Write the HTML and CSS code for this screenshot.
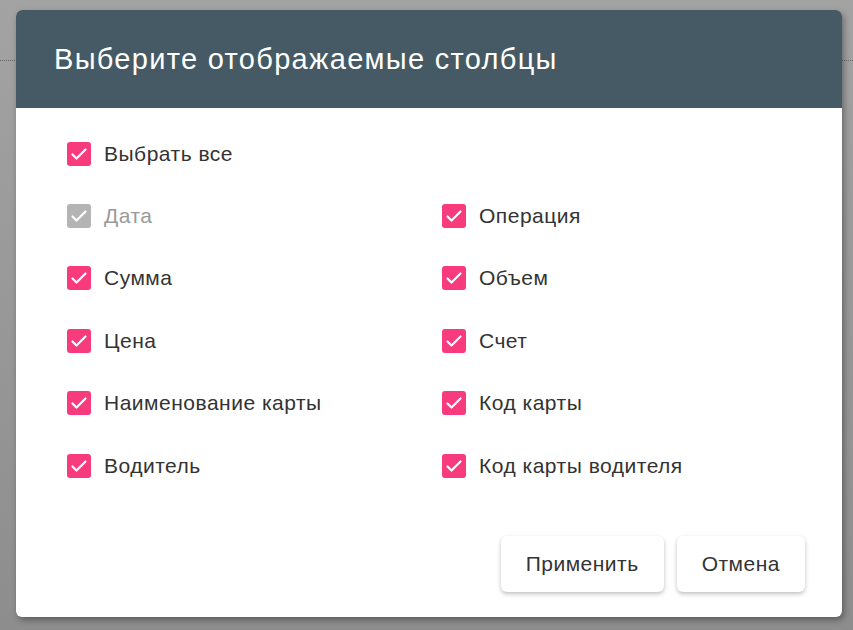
FILE: index.html
```html
<!DOCTYPE html>
<html lang="ru">

<head>
    <meta charset="UTF-8">
    <meta name="viewport" content="width=device-width, initial-scale=1.0">
    <title>Столбцы</title>
    <link rel="stylesheet" href="styles.css">
</head>

<body>
    <div class="backdrop">
        <div class="rule"></div>
        <div class="dialog">
            <div class="dialog-header">
                <h1>Выберите отображаемые столбцы</h1>
            </div>
            <div class="dialog-body">
                <label class="check">
                    <span class="box"><svg viewBox="0 0 24 24"><path d="M5.5 12.5l4 4 9-9"/></svg></span>
                    Выбрать все
                </label>
                <div class="columns">
                    <label class="check disabled">
                        <span class="box"><svg viewBox="0 0 24 24"><path d="M5.5 12.5l4 4 9-9"/></svg></span>
                        Дата
                    </label>
                    <label class="check">
                        <span class="box"><svg viewBox="0 0 24 24"><path d="M5.5 12.5l4 4 9-9"/></svg></span>
                        Операция
                    </label>
                    <label class="check">
                        <span class="box"><svg viewBox="0 0 24 24"><path d="M5.5 12.5l4 4 9-9"/></svg></span>
                        Сумма
                    </label>
                    <label class="check">
                        <span class="box"><svg viewBox="0 0 24 24"><path d="M5.5 12.5l4 4 9-9"/></svg></span>
                        Объем
                    </label>
                    <label class="check">
                        <span class="box"><svg viewBox="0 0 24 24"><path d="M5.5 12.5l4 4 9-9"/></svg></span>
                        Цена
                    </label>
                    <label class="check">
                        <span class="box"><svg viewBox="0 0 24 24"><path d="M5.5 12.5l4 4 9-9"/></svg></span>
                        Счет
                    </label>
                    <label class="check">
                        <span class="box"><svg viewBox="0 0 24 24"><path d="M5.5 12.5l4 4 9-9"/></svg></span>
                        Наименование карты
                    </label>
                    <label class="check">
                        <span class="box"><svg viewBox="0 0 24 24"><path d="M5.5 12.5l4 4 9-9"/></svg></span>
                        Код карты
                    </label>
                    <label class="check">
                        <span class="box"><svg viewBox="0 0 24 24"><path d="M5.5 12.5l4 4 9-9"/></svg></span>
                        Водитель
                    </label>
                    <label class="check">
                        <span class="box"><svg viewBox="0 0 24 24"><path d="M5.5 12.5l4 4 9-9"/></svg></span>
                        Код карты водителя
                    </label>
                </div>
            </div>
            <div class="dialog-actions">
                <button class="btn">Применить</button>
                <button class="btn">Отмена</button>
            </div>
        </div>
    </div>
</body>

</html>
```

FILE: styles.css
```css
* {
    font-family: "Liberation Sans", Arial, sans-serif;
    box-sizing: border-box;
}

body {
    margin: 0;
    background-color: #9a9a9a;
}

.backdrop {
    position: relative;
    width: 853px;
    height: 630px;
    padding: 10px 0 0 16px;
    background: linear-gradient(#a3a3a3, #8d8d8d);
    overflow: hidden;
}

.rule {
    position: absolute;
    top: 60px;
    left: 0;
    width: 100%;
    border-top: 1px dotted #666;
}

.dialog {
    position: relative;
    display: flex;
    flex-direction: column;
    width: 826px;
    height: 607px;
    background-color: #FFFFFF;
    border-radius: 6px;
    overflow: hidden;
    box-shadow: 2px 3px 6px rgba(0, 0, 0, 0.35);
}

.dialog-header {
    height: 98px;
    background-color: #455A64;
    padding: 0 38px;
    display: flex;
    align-items: center;
}

.dialog-header>h1 {
    margin: 0;
    color: #FFFFFF;
    font-size: 29px;
    letter-spacing: 1.3px;
    font-weight: normal;
}

.dialog-body {
    padding: 34px 0 0 51px;
}

.columns {
    display: grid;
    grid-template-columns: 375px 1fr;
    row-gap: 38.4px;
    margin-top: 38px;
}

.check {
    display: flex;
    align-items: center;
    gap: 13px;
    height: 24px;
    font-size: 21px;
    letter-spacing: 0.5px;
    color: #333333;
}

.check.disabled {
    color: #9A9A9A;
}

.box {
    width: 24px;
    height: 24px;
    border-radius: 3px;
    background-color: #F73B7C;
}

.check.disabled .box {
    background-color: #B4B4B4;
}

.box>svg {
    display: block;
    width: 24px;
    height: 24px;
    fill: none;
    stroke: #FFFFFF;
    stroke-width: 2.2;
    stroke-linecap: round;
    stroke-linejoin: round;
}

.dialog-actions {
    margin-top: auto;
    display: flex;
    justify-content: flex-end;
    gap: 13px;
    padding: 0 37px 25px 0;
}

.btn {
    height: 56px;
    padding: 0 25px;
    font-size: 21px;
    letter-spacing: 0.5px;
    color: #333333;
    background-color: #FFFFFF;
    border: none;
    border-radius: 6px;
    box-shadow: 0 2px 4px rgba(0, 0, 0, 0.25);
}
```
